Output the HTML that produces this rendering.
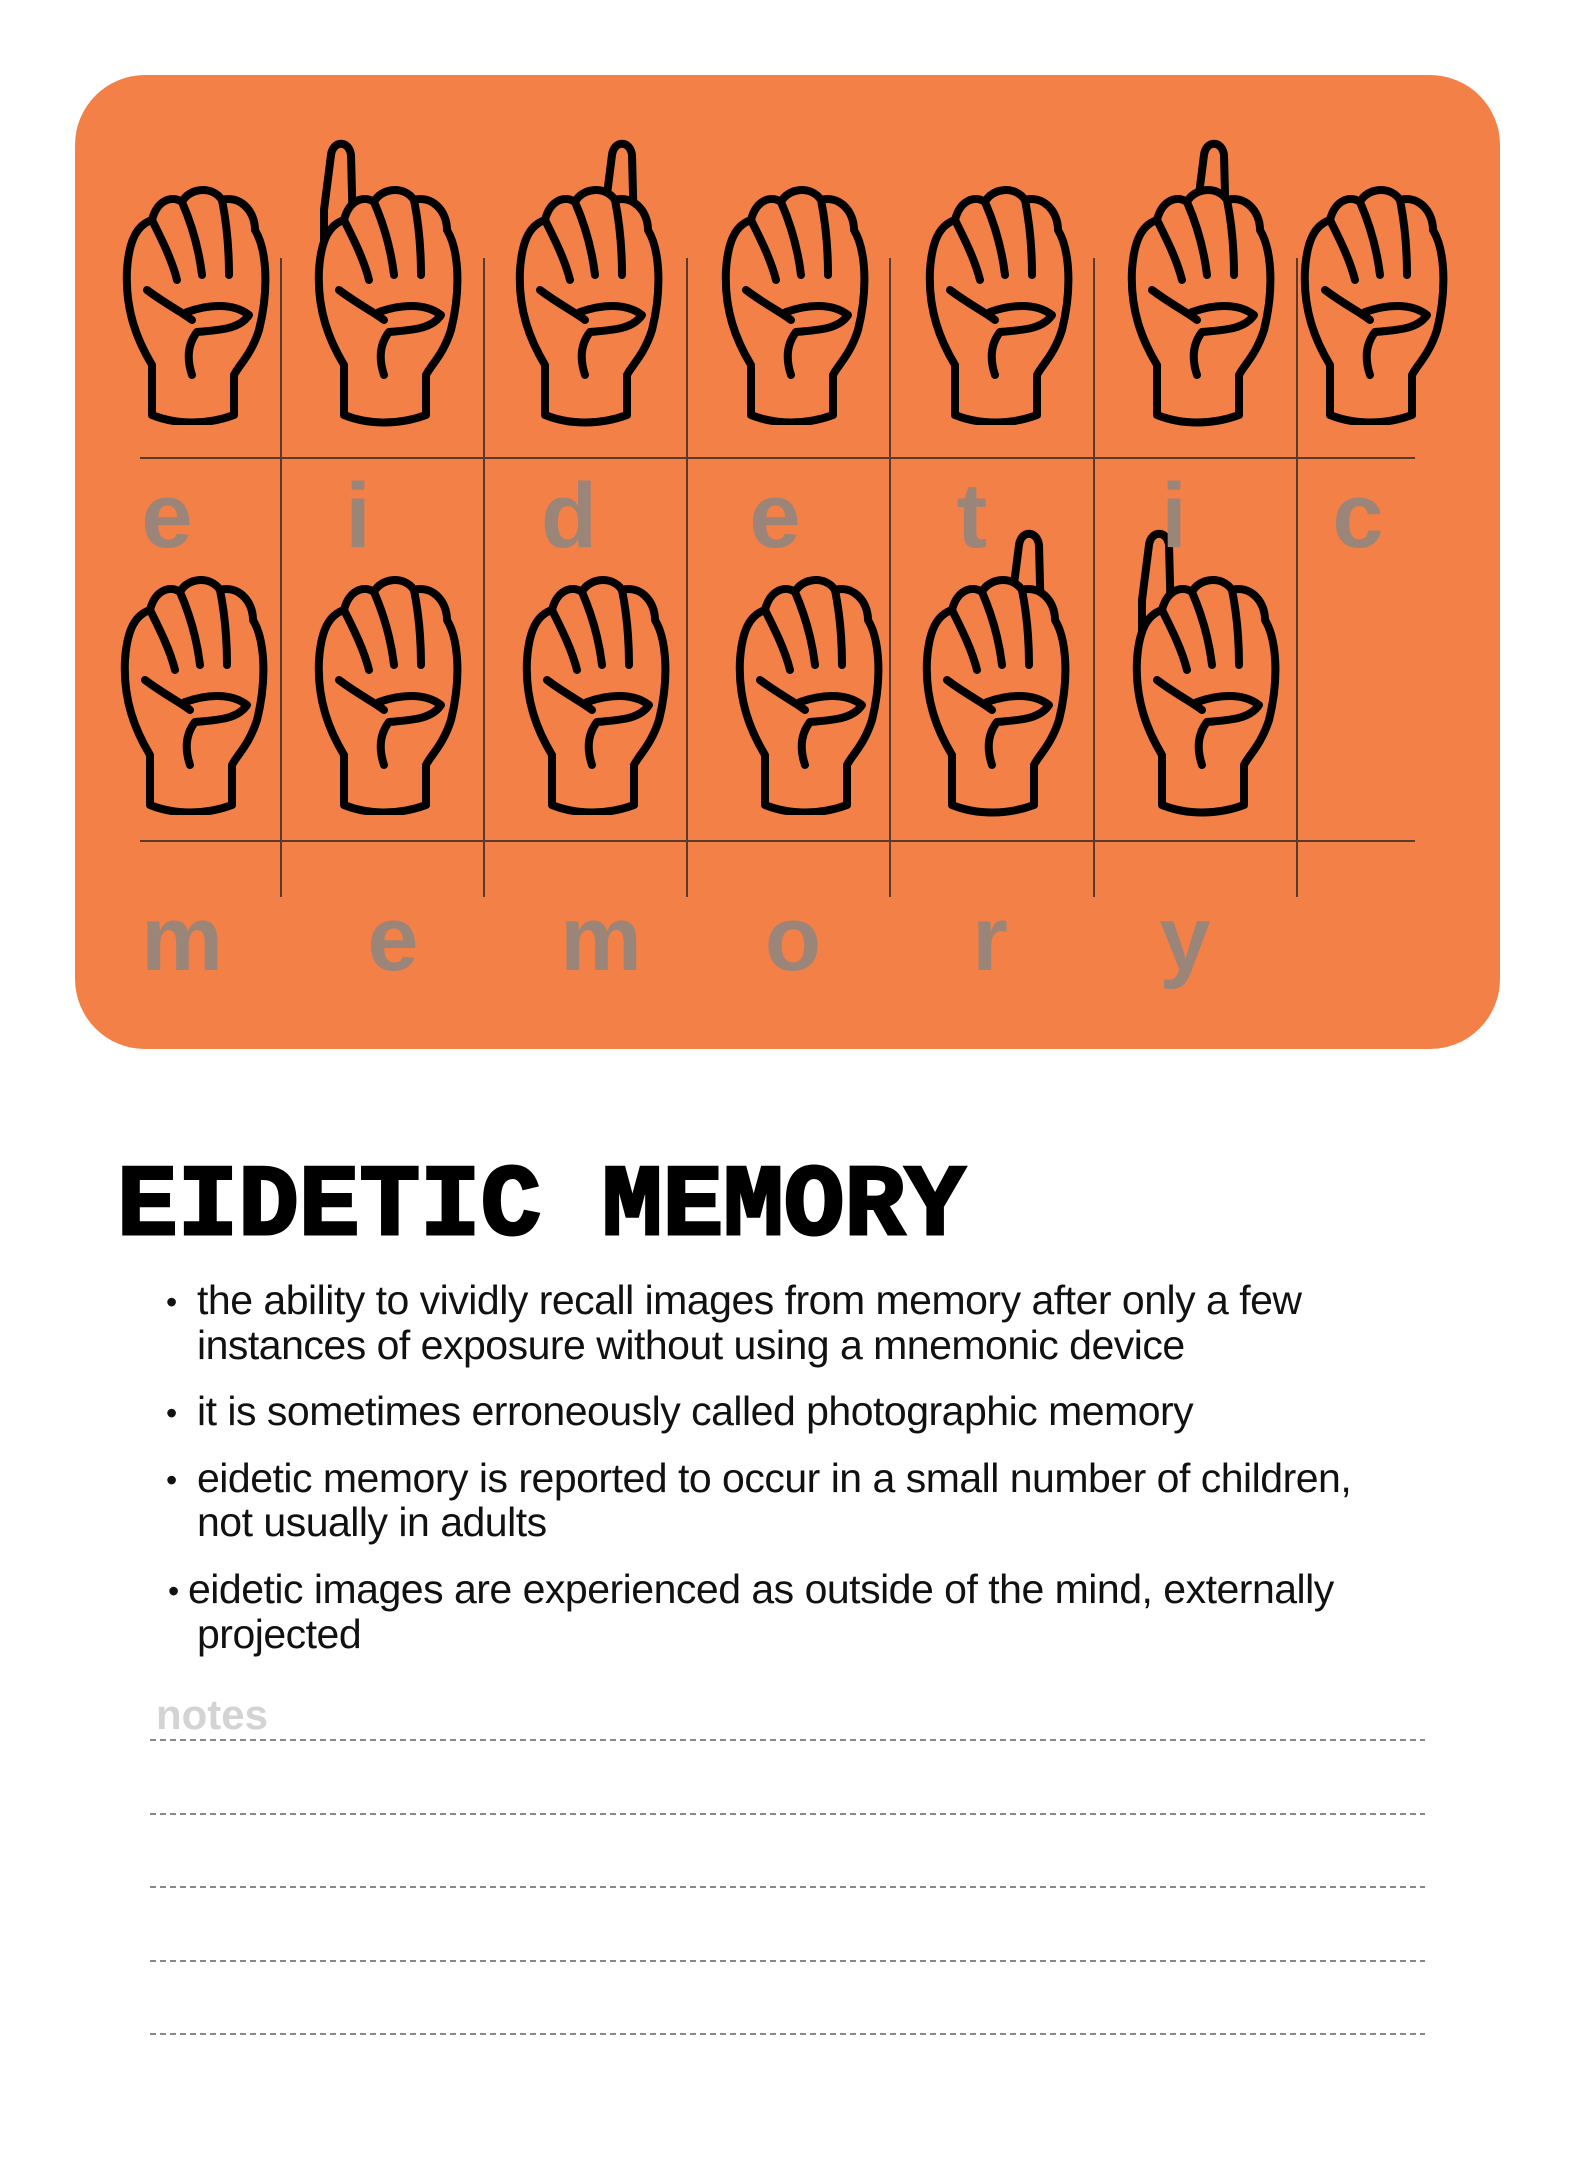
<!DOCTYPE html>
<html><head><meta charset="utf-8"><style>
html,body{margin:0;padding:0;background:#fff;}
body{width:1575px;height:2178px;position:relative;overflow:hidden;font-family:"Liberation Sans",sans-serif;}
.card{position:absolute;left:75px;top:75px;width:1425px;height:974px;background:#f38047;border-radius:70px;}
.hl{position:absolute;height:1.5px;background:#5a3a2a;left:140px;width:1275px;}
.vl{position:absolute;width:1.5px;background:#5a3a2a;top:258px;height:639px;}
.lt{position:absolute;font-weight:bold;font-size:92px;color:#9b8478;transform:translateX(-50%);line-height:1;}
.hand{position:absolute;width:160px;height:245px;}
h1{position:absolute;left:117px;top:1158px;margin:0;font-family:"Liberation Mono",monospace;font-weight:bold;font-size:101px;line-height:1;color:#000;-webkit-text-stroke:3px #000;}
.ln{position:absolute;font-size:41px;letter-spacing:-0.5px;color:#111;white-space:nowrap;line-height:1;}
.dot{position:absolute;font-size:32px;color:#111;}
.dash{position:absolute;left:150px;width:1275px;height:1.5px;background:repeating-linear-gradient(90deg,#888 0 6px,transparent 6px 10px);}
</style></head><body>
<svg width="0" height="0" style="position:absolute">
<defs>
<g id="fist" fill="#f38047" stroke="#000" stroke-width="8" stroke-linecap="round" stroke-linejoin="round">
<path d="M35,235 L35,185 C20,160 8,130 10,90 C12,60 20,45 35,40 C40,20 55,15 65,22 C72,8 95,5 105,20 C122,15 138,30 138,50 C150,70 152,110 142,150 C134,175 122,185 117,195 L117,235 C90,245 60,245 35,235 Z"/>
<path fill="none" d="M35,40 C45,60 55,80 60,100 M65,22 C75,45 82,70 85,95 M105,20 C110,45 112,70 112,95 M30,110 C50,125 65,132 75,140 M70,132 C90,125 115,122 132,135 C122,150 100,150 80,152 M80,152 C70,165 70,180 75,195"/>
</g>
<g id="up" fill="#f38047" stroke="#000" stroke-width="8" stroke-linejoin="round">
<path d="M95,30 L102,-25 C104,-40 120,-40 122,-25 L125,90 L95,90 Z"/>
</g>
</defs>
</svg>
<div class="card"></div>
<div class="hl" style="top:457px"></div>
<div class="hl" style="top:840px"></div>
<div class="vl" style="left:280px"></div><div class="vl" style="left:483px"></div><div class="vl" style="left:686px"></div><div class="vl" style="left:889px"></div><div class="vl" style="left:1093px"></div><div class="vl" style="left:1296px"></div>

<svg class="hand" style="left:112px;top:180px" viewBox="0 0 150 245"><use href="#fist"/></svg>
<svg class="hand" style="left:304px;top:180px" viewBox="0 0 150 245" overflow="visible"><g transform="translate(-80,0)"><use href="#up"/></g><use href="#fist"/></svg>
<svg class="hand" style="left:505px;top:180px" viewBox="0 0 150 245" overflow="visible"><use href="#up"/><use href="#fist"/></svg>
<svg class="hand" style="left:711px;top:180px" viewBox="0 0 150 245"><use href="#fist"/></svg>
<svg class="hand" style="left:915px;top:180px" viewBox="0 0 150 245"><use href="#fist"/></svg>
<svg class="hand" style="left:1117px;top:180px" viewBox="0 0 150 245" overflow="visible"><g transform="translate(-20,0)"><use href="#up"/></g><use href="#fist"/></svg>
<svg class="hand" style="left:1290px;top:180px" viewBox="0 0 150 245"><use href="#fist"/></svg>

<svg class="hand" style="left:110px;top:570px" viewBox="0 0 150 245"><use href="#fist"/></svg>
<svg class="hand" style="left:304px;top:570px" viewBox="0 0 150 245"><use href="#fist"/></svg>
<svg class="hand" style="left:512px;top:570px" viewBox="0 0 150 245"><use href="#fist"/></svg>
<svg class="hand" style="left:725px;top:570px" viewBox="0 0 150 245"><use href="#fist"/></svg>
<svg class="hand" style="left:912px;top:570px" viewBox="0 0 150 245" overflow="visible"><use href="#up"/><use href="#fist"/></svg>
<svg class="hand" style="left:1122px;top:570px" viewBox="0 0 150 245" overflow="visible"><g transform="translate(-80,0)"><use href="#up"/></g><use href="#fist"/></svg>

<div class="lt" style="left:167px;top:470px">e</div>
<div class="lt" style="left:358px;top:470px">i</div>
<div class="lt" style="left:569px;top:470px">d</div>
<div class="lt" style="left:775px;top:470px">e</div>
<div class="lt" style="left:972px;top:470px">t</div>
<div class="lt" style="left:1174px;top:470px">i</div>
<div class="lt" style="left:1358px;top:470px">c</div>
<div class="lt" style="left:182px;top:893px">m</div>
<div class="lt" style="left:393px;top:893px">e</div>
<div class="lt" style="left:601px;top:893px">m</div>
<div class="lt" style="left:793px;top:893px">o</div>
<div class="lt" style="left:990px;top:893px">r</div>
<div class="lt" style="left:1185px;top:893px">y</div>

<h1>EIDETIC MEMORY</h1>

<div class="dot" style="left:166px;top:1284px">•</div>
<div class="ln" style="left:197px;top:1280px">the ability to vividly recall images from memory after only a few</div>
<div class="ln" style="left:197px;top:1325px">instances of exposure without using a mnemonic device</div>
<div class="dot" style="left:166px;top:1395px">•</div>
<div class="ln" style="left:197px;top:1391px">it is sometimes erroneously called photographic memory</div>
<div class="dot" style="left:166px;top:1462px">•</div>
<div class="ln" style="left:197px;top:1458px">eidetic memory is reported to occur in a small number of children,</div>
<div class="ln" style="left:197px;top:1502px">not usually in adults</div>
<div class="dot" style="left:168px;top:1573px">•</div>
<div class="ln" style="left:188px;top:1569px">eidetic images are experienced as outside of the mind, externally</div>
<div class="ln" style="left:197px;top:1614px">projected</div>

<div style="position:absolute;left:156px;top:1694px;font-size:42px;font-weight:bold;color:#d3d3d3;line-height:1">notes</div>
<div class="dash" style="top:1739px"></div>
<div class="dash" style="top:1813px"></div>
<div class="dash" style="top:1886px"></div>
<div class="dash" style="top:1960px"></div>
<div class="dash" style="top:2033px"></div>
</body></html>
